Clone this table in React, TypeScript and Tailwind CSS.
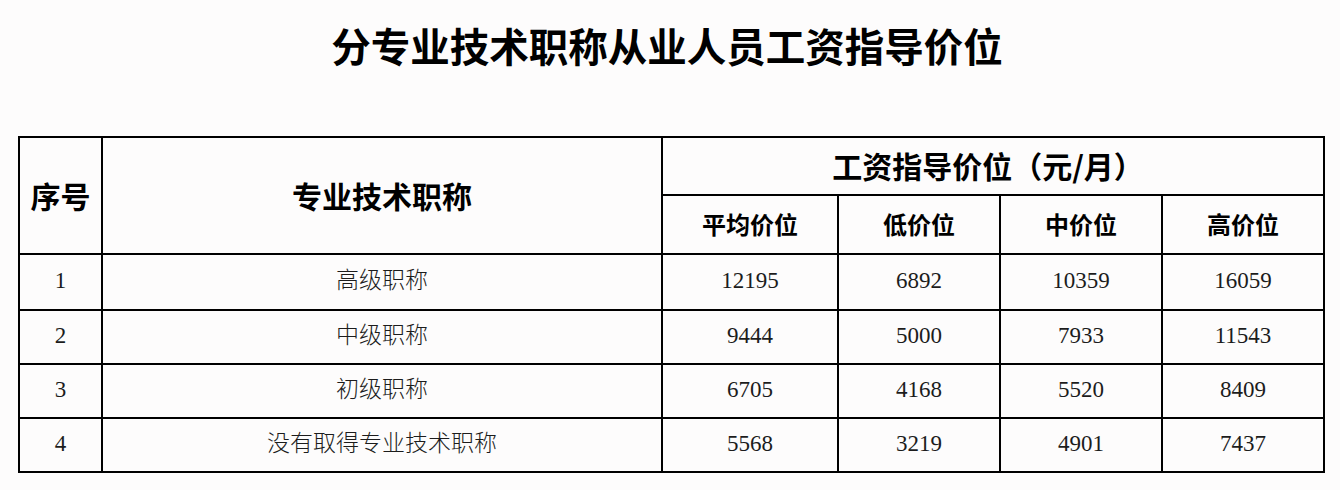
const rows = [
  { no: '1', title: '高级职称', avg: '12195', low: '6892', mid: '10359', high: '16059' },
  { no: '2', title: '中级职称', avg: '9444', low: '5000', mid: '7933', high: '11543' },
  { no: '3', title: '初级职称', avg: '6705', low: '4168', mid: '5520', high: '8409' },
  { no: '4', title: '没有取得专业技术职称', avg: '5568', low: '3219', mid: '4901', high: '7437' },
]

const heiFont = "font-['Noto_Sans_CJK_SC',sans-serif]"
const dataFont = "font-['Liberation_Serif','Noto_Sans_CJK_SC',serif]"

export default function App() {
  return (
    <div className="w-[1340px] h-[490px] bg-[#fdfcfc] overflow-hidden">
      {/* Title */}
      <h1
        className={`pt-[25px] pr-[6px] text-center text-[39.5px] leading-none font-bold text-black ${heiFont}`}
      >
        分专业技术职称从业人员工资指导价位
      </h1>

      {/* Table */}
      <table className="ml-[18px] mt-[71px] w-[1305px] table-fixed border-collapse border-2 border-black text-black">
        <colgroup>
          <col className="w-[83px]" />
          <col className="w-[560px]" />
          <col className="w-[176px]" />
          <col className="w-[162px]" />
          <col className="w-[162px]" />
          <col className="w-[162px]" />
        </colgroup>
        <thead className={`${heiFont} font-bold`}>
          <tr className="h-[58px]">
            <th rowSpan={2} className="border-2 border-black text-[30px] font-bold">
              序号
            </th>
            <th rowSpan={2} className="border-2 border-black text-[30px] font-bold">
              专业技术职称
            </th>
            <th colSpan={4} className="border-2 border-black pr-[10px] text-[30px] font-bold">
              工资指导价位（元/月）
            </th>
          </tr>
          <tr className="h-[59px] text-[24px]">
            <th className="border-2 border-black font-bold">平均价位</th>
            <th className="border-2 border-black font-bold">低价位</th>
            <th className="border-2 border-black font-bold">中价位</th>
            <th className="border-2 border-black font-bold">高价位</th>
          </tr>
        </thead>
        <tbody className={`${dataFont} text-[23px] text-[#1c1c1c] text-center`}>
          {rows.map((r, i) => (
            <tr key={r.no} className={i === 0 ? 'h-[56px]' : 'h-[54px]'}>
              <td className="border-2 border-black">{r.no}</td>
              <td className="border-2 border-black font-light">{r.title}</td>
              <td className="border-2 border-black">{r.avg}</td>
              <td className="border-2 border-black">{r.low}</td>
              <td className="border-2 border-black">{r.mid}</td>
              <td className="border-2 border-black">{r.high}</td>
            </tr>
          ))}
        </tbody>
      </table>
    </div>
  )
}
